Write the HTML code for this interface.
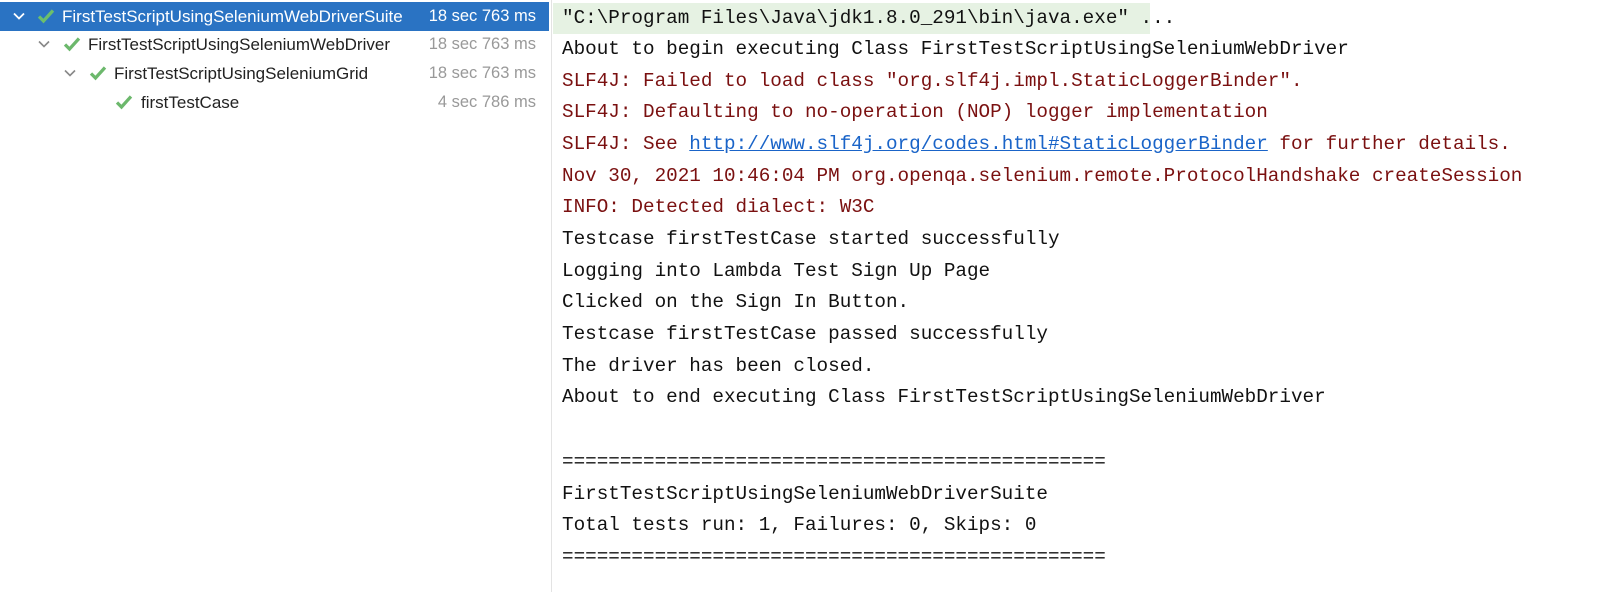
<!DOCTYPE html>
<html><head><style>
body{margin:0;width:1600px;height:592px;background:#fff;overflow:hidden;position:relative;font-family:"Liberation Sans",sans-serif}
#tree{position:absolute;left:0;top:0;width:551px;height:592px;border-right:1px solid #e3e3e3}
.row{position:absolute;left:0;width:549px;height:29px;font-size:17px;line-height:29px;color:#222}
.row .t{position:absolute;right:13px;top:0;color:#999;font-size:16.5px}
.sel{background:#2a73c3;color:#fff}
.sel .t{color:#fff}
.row svg{position:absolute;top:7px}
.lbl{position:absolute;top:0}
#con{position:absolute;left:562px;top:0;font-family:"Liberation Mono",monospace;font-size:19.3px;white-space:pre;color:#111}
.l{position:absolute;left:0;height:31.6px;line-height:31.6px}
.r{color:#7a1010}
a{color:#1a64c8;text-decoration:underline}
#hl{position:absolute;left:553px;top:3px;width:597px;height:31px;background:#e6f2e3}
</style></head><body>
<div id="tree">
<div class="row sel" style="top:2px"><svg style="left:12px" width="14" height="14" viewBox="0 0 14 14"><path d="M2 4.5L7 9.5L12 4.5" fill="none" stroke="#fff" stroke-width="1.8"/></svg><svg style="left:37px;top:6px" width="18" height="16" viewBox="0 0 18 16"><path d="M2 8.5L6.5 13L16 2.5" fill="none" stroke="#6cbf6c" stroke-width="3.2"/></svg><span class="lbl" style="left:62px">FirstTestScriptUsingSeleniumWebDriverSuite</span><span class="t">18 sec 763 ms</span></div>
<div class="row" style="top:30px"><svg style="left:37px" width="14" height="14" viewBox="0 0 14 14"><path d="M2 4.5L7 9.5L12 4.5" fill="none" stroke="#888" stroke-width="1.6"/></svg><svg style="left:63px;top:6px" width="18" height="16" viewBox="0 0 18 16"><path d="M2 8.5L6.5 13L16 2.5" fill="none" stroke="#6cb86c" stroke-width="3.2"/></svg><span class="lbl" style="left:88px">FirstTestScriptUsingSeleniumWebDriver</span><span class="t">18 sec 763 ms</span></div>
<div class="row" style="top:59px"><svg style="left:63px" width="14" height="14" viewBox="0 0 14 14"><path d="M2 4.5L7 9.5L12 4.5" fill="none" stroke="#888" stroke-width="1.6"/></svg><svg style="left:89px;top:6px" width="18" height="16" viewBox="0 0 18 16"><path d="M2 8.5L6.5 13L16 2.5" fill="none" stroke="#6cb86c" stroke-width="3.2"/></svg><span class="lbl" style="left:114px">FirstTestScriptUsingSeleniumGrid</span><span class="t">18 sec 763 ms</span></div>
<div class="row" style="top:88px"><svg style="left:115px;top:6px" width="18" height="16" viewBox="0 0 18 16"><path d="M2 8.5L6.5 13L16 2.5" fill="none" stroke="#6cb86c" stroke-width="3.2"/></svg><span class="lbl" style="left:141px">firstTestCase</span><span class="t">4 sec 786 ms</span></div>
</div>
<div id="hl"></div>
<div id="con">
<div class="l" style="top:3px">"C:\Program Files\Java\jdk1.8.0_291\bin\java.exe" ...</div>
<div class="l" style="top:34px">About to begin executing Class FirstTestScriptUsingSeleniumWebDriver</div>
<div class="l r" style="top:66px">SLF4J: Failed to load class "org.slf4j.impl.StaticLoggerBinder".</div>
<div class="l r" style="top:97px">SLF4J: Defaulting to no-operation (NOP) logger implementation</div>
<div class="l r" style="top:129px">SLF4J: See <a>http://www.slf4j.org/codes.html#StaticLoggerBinder</a> for further details.</div>
<div class="l r" style="top:161px">Nov 30, 2021 10:46:04 PM org.openqa.selenium.remote.ProtocolHandshake createSession</div>
<div class="l r" style="top:192px">INFO: Detected dialect: W3C</div>
<div class="l" style="top:224px">Testcase firstTestCase started successfully</div>
<div class="l" style="top:256px">Logging into Lambda Test Sign Up Page</div>
<div class="l" style="top:287px">Clicked on the Sign In Button.</div>
<div class="l" style="top:319px">Testcase firstTestCase passed successfully</div>
<div class="l" style="top:351px">The driver has been closed.</div>
<div class="l" style="top:382px">About to end executing Class FirstTestScriptUsingSeleniumWebDriver</div>
<div class="l" style="top:447px">===============================================</div>
<div class="l" style="top:479px">FirstTestScriptUsingSeleniumWebDriverSuite</div>
<div class="l" style="top:510px">Total tests run: 1, Failures: 0, Skips: 0</div>
<div class="l" style="top:542px">===============================================</div>
</div>
</body></html>
